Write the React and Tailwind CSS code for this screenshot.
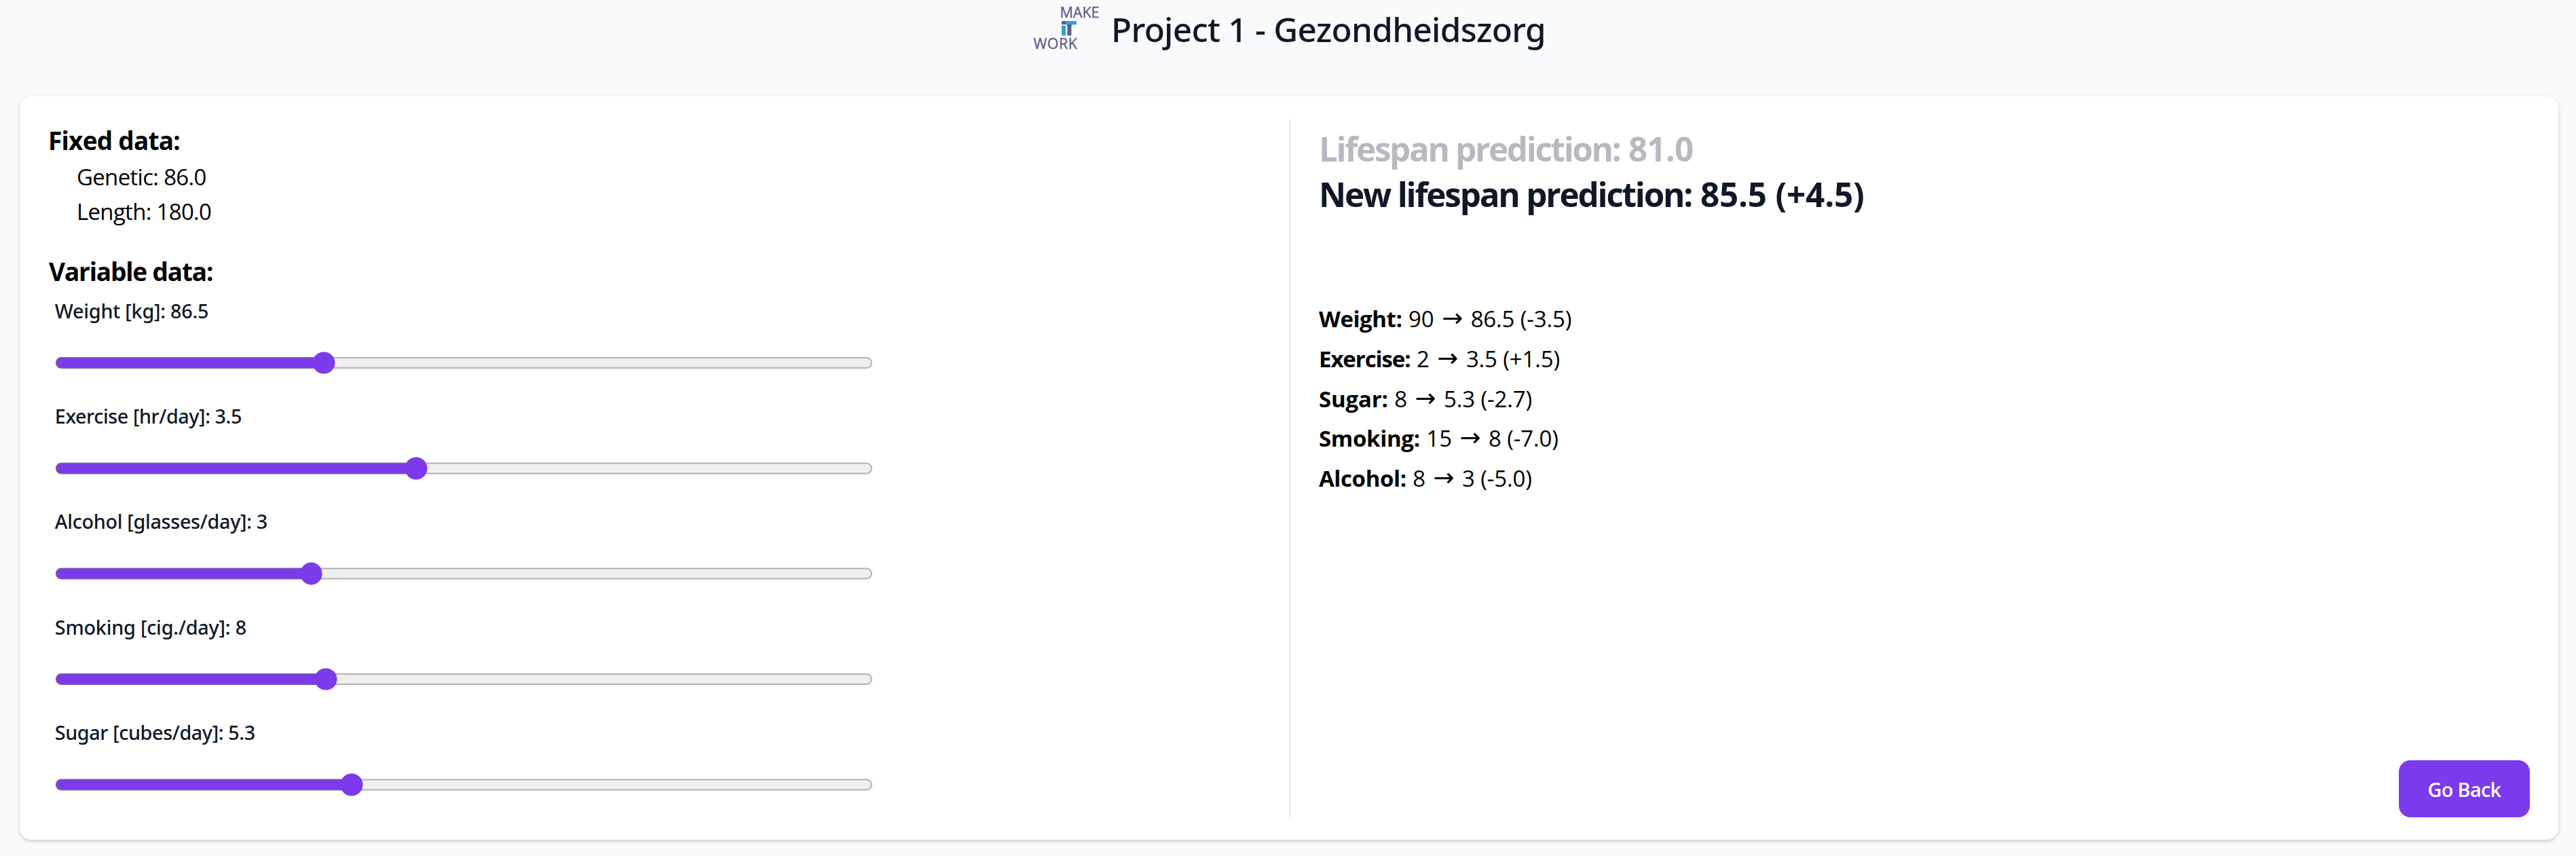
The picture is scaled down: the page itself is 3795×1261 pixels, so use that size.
import React from "react";

const sliders = [
  { label: "Weight [kg]: 86.5", value: 32.4, tracking: "tracking-[-0.25px]" },
  { label: "Exercise [hr/day]: 3.5", value: 44, tracking: "tracking-[-0.45px]" },
  { label: "Alcohol [glasses/day]: 3", value: 30.8, tracking: "tracking-[-0.34px]" },
  { label: "Smoking [cig./day]: 8", value: 32.65, tracking: "tracking-[-0.23px]" },
  { label: "Sugar [cubes/day]: 5.3", value: 35.9, tracking: "tracking-[-0.42px]" },
];

const changes = [
  { name: "Weight:", from: "90", to: "86.5 (-3.5)", tracking: "tracking-[-0.45px]" },
  { name: "Exercise:", from: "2", to: "3.5 (+1.5)", tracking: "tracking-[-1.1px]" },
  { name: "Sugar:", from: "8", to: "5.3 (-2.7)", tracking: "tracking-[-0.2px]" },
  { name: "Smoking:", from: "15", to: "8 (-7.0)", tracking: "tracking-[-0.31px]" },
  { name: "Alcohol:", from: "8", to: "3 (-5.0)", tracking: "tracking-[-0.4px]" },
];

function Logo() {
  return (
    <svg width="102" height="85" viewBox="0 0 102 85" className="shrink-0" aria-label="Make IT Work">
      <g fill="#635a8a" stroke="#635a8a" strokeWidth="0.35" fontFamily="Open Sans, sans-serif" fontSize="21.5">
        <text x="41.5" y="25.7">MAKE</text>
        <text x="2.5" y="72.3" letterSpacing="0.45">WORK</text>
      </g>
      <rect x="44" y="31" width="6" height="5.3" fill="#635a8a" />
      <rect x="50" y="31" width="16" height="5.3" fill="#359fdc" />
      <rect x="44" y="38.3" width="6" height="14" fill="#359fdc" />
      <rect x="44" y="38.3" width="6" height="2" fill="#2f83bd" />
      <rect x="52.4" y="36.3" width="6" height="16" fill="#635a8a" />
      <rect x="52.4" y="36.3" width="6" height="2" fill="#514879" />
    </svg>
  );
}

function Slider({ label, value, tracking }) {
  return (
    <div className="h-[155.3px]">
      <label className={`block h-[42px] font-['Noto_Sans',sans-serif] text-[28.8px] leading-[42px] font-medium text-gray-900 ${tracking}`}>
        {label}
      </label>
      <input
        type="range"
        min="0"
        max="100"
        step="any"
        defaultValue={value}
        aria-label={label}
        className="m-0 mt-[18.6px] block h-[16px] w-[574px] accent-[#7c3aed] [zoom:2.1]"
      />
    </div>
  );
}

export default function App() {
  return (
    <div className="h-[1261px] w-full overflow-hidden bg-[#f9fafc] font-['Open_Sans',sans-serif] text-black">
      <header className="flex h-[85px] items-center justify-center gap-[15px] pl-[3px]">
        <Logo />
        <h1 className="w-[641px] font-['Noto_Sans',sans-serif] text-[49.4px] leading-[84px] font-medium tracking-[-0.7px] whitespace-nowrap text-gray-900">
          Project 1 - Gezondheidszorg
        </h1>
      </header>

      <main className="mt-[57px] mr-[26px] ml-[29px] flex h-[1094.7px] rounded-[17px] bg-white pt-[34px] pr-[42px] pb-[33px] pl-[42px] shadow-[0_2px_6px_rgba(0,0,0,0.1),0_2px_4px_rgba(0,0,0,0.1)]">
        <section className="w-[1828px] shrink-0">
          <h2 className="h-[60px] text-[37px] leading-[62px] font-bold tracking-[-0.77px]">Fixed data:</h2>
          <div className="pl-[42px] text-[33px] leading-[50.5px] tracking-[-0.7px]">
            <p>Genetic: 86.0</p>
            <p>Length: 180.0</p>
          </div>
          <h2 className="mt-[33px] ml-[1px] text-[37px] leading-[60px] font-bold tracking-[-1.17px]">
            Variable data:
          </h2>
          <div className="mt-[6.8px] ml-[9.8px]">
            {sliders.map((s) => (
              <Slider key={s.label} {...s} />
            ))}
          </div>
        </section>

        <section className="flex flex-1 flex-col border-l-2 border-gray-200 pt-[9px] pl-[42px]">
          <h2 className="text-[49.4px] leading-[67px] font-bold tracking-[-2.35px] text-[#b8b9c0]">
            Lifespan prediction: <span className="ml-[2px] tracking-[-0.8px]">81.0</span>
          </h2>
          <h2 className="text-[49.4px] leading-[67px] font-bold tracking-[-2.2px] text-gray-900">
            New lifespan prediction: <span className="ml-[2px] tracking-[-0.2px]">85.5 (+4.5)</span>
          </h2>
          <ul className="mt-[122px] text-[33px] leading-[58.8px]">
            {changes.map((c) => (
              <li key={c.name} className="flex h-[58.8px]">
                <strong className={`font-bold ${c.tracking}`}>{c.name}</strong>
                <span className="ml-[9.5px]">{c.from}</span>
                <span className="w-[54px] text-center font-['DejaVu_Sans',sans-serif] text-[37px] leading-[56px]">→</span>
                <span className="tracking-[-0.15px]">{c.to}</span>
              </li>
            ))}
          </ul>
          <button className="mt-auto h-[84px] w-[193px] self-end rounded-[17px] bg-[#7c3aed] pt-[2px] text-[28.8px] leading-[42px] font-semibold tracking-[-0.66px] text-white">
            Go Back
          </button>
        </section>
      </main>
    </div>
  );
}
